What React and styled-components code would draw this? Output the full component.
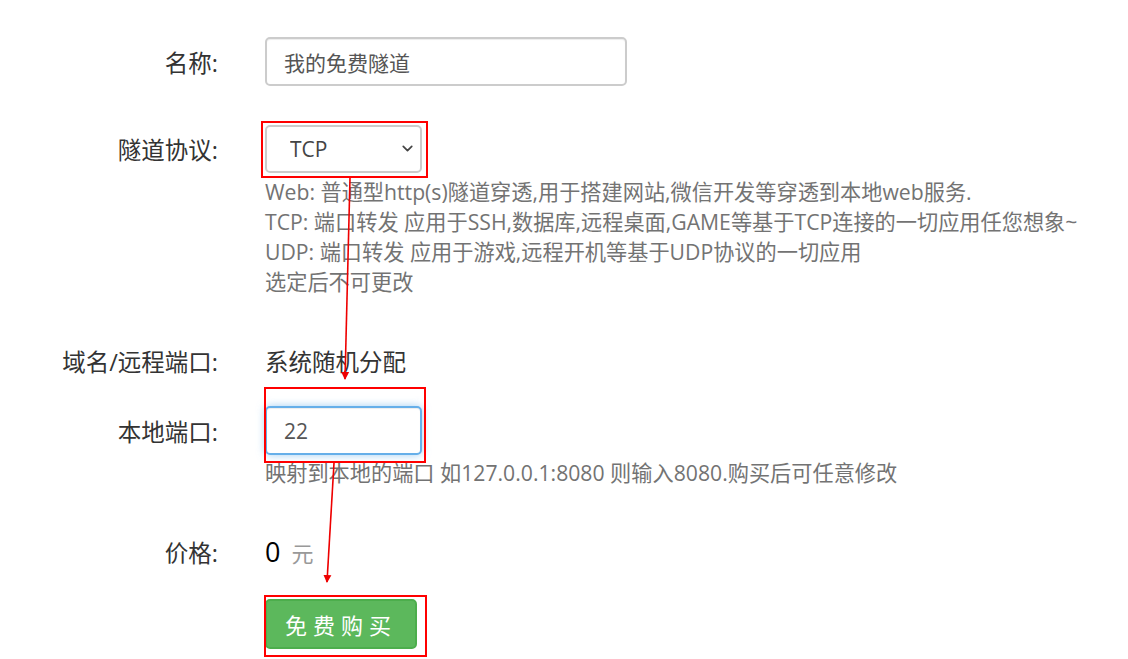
import React from 'react';
import styled, { createGlobalStyle } from 'styled-components';
import { ChevronDown } from 'lucide-react';

const GlobalStyle = createGlobalStyle`
  html, body {
    margin: 0;
    padding: 0;
    background: #fff;
  }
  body {
    font-family: "Open Sans", "Noto Sans CJK SC", sans-serif;
    color: #333;
  }
`;

const Page = styled.form`
  position: relative;
  width: 1128px;
  height: 659px;
  padding-top: 37px;
  box-sizing: border-box;
  overflow: hidden;
`;

const Row = styled.div`
  display: flex;
  align-items: flex-start;
  margin-top: ${(p) => p.$gap || 0}px;
`;

const Label = styled.label`
  flex: 0 0 218px;
  height: ${(p) => p.$h || 49}px;
  display: flex;
  align-items: center;
  justify-content: flex-end;
  font-size: 23.5px;
  color: #333;
  white-space: nowrap;
`;

const Control = styled.div`
  margin-left: 47px;
  display: flex;
  flex-direction: column;
`;

const TextInput = styled.input`
  box-sizing: border-box;
  width: ${(p) => p.$w}px;
  height: 49px;
  padding: 0 17px;
  font: inherit;
  font-size: 21px;
  color: #555;
  background: #fff;
  border: 2px solid ${(p) => (p.$focus ? '#66afe9' : '#ccc')};
  border-radius: 5px;
  outline: none;
  box-shadow: ${(p) =>
    p.$focus
      ? 'inset 0 1px 1px rgba(0,0,0,.075), 0 0 8px rgba(102,175,233,.6)'
      : 'inset 0 1px 1px rgba(0,0,0,.075)'};
`;

const SelectWrap = styled.div`
  position: relative;
  width: 157px;
  height: 48px;

  svg {
    position: absolute;
    right: 6px;
    top: 15px;
    pointer-events: none;
  }
`;

const Select = styled.select`
  box-sizing: border-box;
  width: 100%;
  height: 100%;
  padding: 0 23px;
  appearance: none;
  font: inherit;
  font-size: 21px;
  color: #444;
  background: #fff;
  border: 2px solid #ccc;
  border-radius: 5px;
  outline: none;
`;

const Help = styled.div`
  margin-top: ${(p) => p.$top || 0}px;
  font-size: 21.2px;
  line-height: 30px;
  color: #737373;
  white-space: nowrap;
`;

const Static = styled.div`
  height: 49px;
  display: flex;
  align-items: center;
  font-size: 23.5px;
  color: #333;
`;

const Price = styled.div`
  height: 49px;
  display: flex;
  align-items: center;
  gap: 11px;

  b {
    font-weight: 400;
    font-size: 27px;
    color: #000;
  }
  span {
    font-size: 22px;
    color: #999;
  }
`;

const BuyButton = styled.button`
  box-sizing: border-box;
  width: 152px;
  height: 50px;
  padding: 0;
  font: inherit;
  font-size: 22px;
  letter-spacing: 6px;
  color: #fff;
  background: #5cb85c;
  border: 2px solid #4cae4c;
  border-radius: 5px;
`;

const Marks = styled.svg`
  position: absolute;
  left: 0;
  top: 0;
  pointer-events: none;
`;

const boxes = [
  { x: 262, y: 122, w: 165, h: 55 },
  { x: 265, y: 388, w: 160, h: 74 },
  { x: 265, y: 596, w: 161, h: 60 },
];

const arrows = [
  { x1: 350, y1: 178, x2: 345, y2: 379 },
  { x1: 334, y1: 463, x2: 327, y2: 582 },
];

const Annotations = () => (
  <Marks width="1128" height="659">
    <defs>
      <marker id="tip" markerWidth="8" markerHeight="10" refX="7" refY="5" orient="auto" markerUnits="userSpaceOnUse">
        <path d="M0,1 L8,5 L0,9 Z" fill="#e00" />
      </marker>
    </defs>
    {boxes.map((b, i) => (
      <rect key={i} x={b.x} y={b.y} width={b.w} height={b.h} fill="none" stroke="#f00" strokeWidth="2" />
    ))}
    {arrows.map((a, i) => (
      <line key={i} x1={a.x1} y1={a.y1} x2={a.x2} y2={a.y2} stroke="#e00" strokeWidth="1.6" markerEnd="url(#tip)" />
    ))}
  </Marks>
);

const App = () => (
  <>
    <GlobalStyle />
    <Page onSubmit={(e) => e.preventDefault()}>
      <Row>
        <Label>名称:</Label>
        <Control>
          <TextInput $w={362} defaultValue="我的免费隧道" />
        </Control>
      </Row>

      <Row $gap={39}>
        <Label $h={48}>隧道协议:</Label>
        <Control>
          <SelectWrap>
            <Select defaultValue="tcp">
              <option value="web">Web</option>
              <option value="tcp">TCP</option>
              <option value="udp">UDP</option>
            </Select>
            <ChevronDown size={17} strokeWidth={2.4} color="#444" />
          </SelectWrap>
          <Help $top={4}>
            <div>Web: 普通型http(s)隧道穿透,用于搭建网站,微信开发等穿透到本地web服务.</div>
            <div>TCP: 端口转发 应用于SSH,数据库,远程桌面,GAME等基于TCP连接的一切应用任您想象~</div>
            <div>UDP: 端口转发 应用于游戏,远程开机等基于UDP协议的一切应用</div>
            <div>选定后不可更改</div>
          </Help>
        </Control>
      </Row>

      <Row $gap={39}>
        <Label>域名/远程端口:</Label>
        <Control>
          <Static>系统随机分配</Static>
        </Control>
      </Row>

      <Row $gap={21}>
        <Label>本地端口:</Label>
        <Control>
          <TextInput $w={157} $focus defaultValue="22" />
          <Help $top={3}>映射到本地的端口 如127.0.0.1:8080 则输入8080.购买后可任意修改</Help>
        </Control>
      </Row>

      <Row $gap={39}>
        <Label>价格:</Label>
        <Control>
          <Price>
            <b>0</b>
            <span>元</span>
          </Price>
        </Control>
      </Row>

      <Row $gap={23}>
        <Label $h={50} />
        <Control>
          <BuyButton type="submit">免费购买</BuyButton>
        </Control>
      </Row>

      <Annotations />
    </Page>
  </>
);

export default App;
